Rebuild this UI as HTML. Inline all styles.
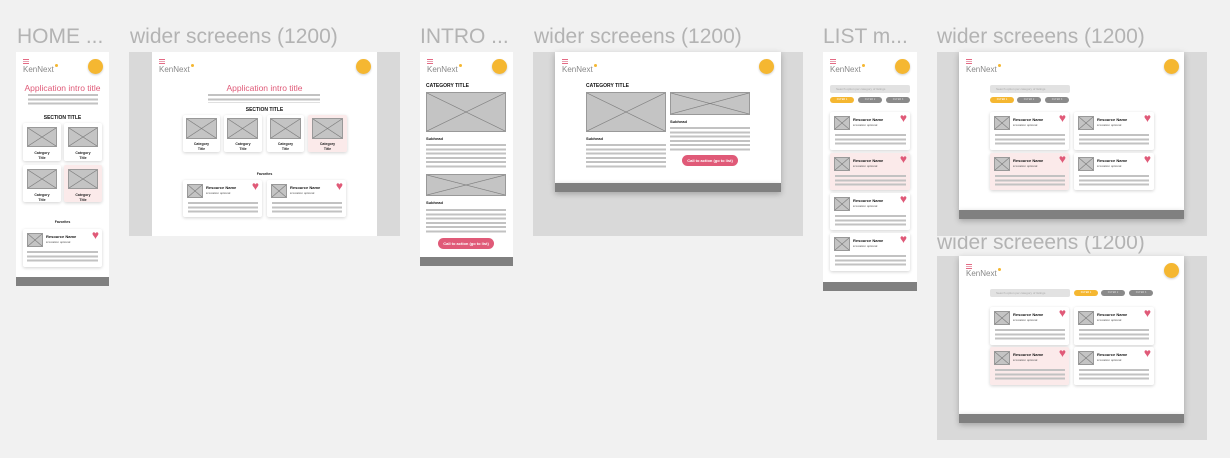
<!DOCTYPE html>
<html><head><meta charset="utf-8"><style>
*{margin:0;padding:0;box-sizing:border-box}
body{width:1230px;height:458px;background:#f1f1f1;position:relative;overflow:hidden;font-family:"Liberation Sans",sans-serif}
.lb{position:absolute;font-size:21px;color:#b3b3b3;line-height:21px;white-space:nowrap}
.g{position:absolute;background:#d9d9d9}
.w{position:absolute;background:#fff}
.wsh{box-shadow:0 2px 6px rgba(0,0,0,.25)}
.bar{position:absolute;background:#808080}
.hb{position:absolute;width:6px;height:1px;background:#e46a84;box-shadow:0 2px 0 #e8a0b0,0 4px 0 #e46a84}
.lg{position:absolute;font-size:8px;color:#888;line-height:8px}
.lg:after{content:"";position:absolute;right:-4px;top:-2px;width:3px;height:3px;border-radius:50%;background:#f5b731}
.ci{position:absolute;width:15px;height:15px;border-radius:50%;background:#f5b731;box-shadow:0 1px 2px rgba(0,0,0,.2)}
.ph{position:absolute;border:1px solid #999;background:linear-gradient(to top right,transparent calc(50% - .6px),#777 50%,transparent calc(50% + .6px)),linear-gradient(to bottom right,transparent calc(50% - .6px),#777 50%,transparent calc(50% + .6px)),#c4c4c4}
.cc{position:absolute;background:#fff;border-radius:2px;box-shadow:0 1px 3px rgba(0,0,0,.18)}
.pk{background:#fbeaea}
.ct{position:absolute;left:0;right:0;text-align:center;font-size:3.5px;line-height:5px;font-weight:bold;color:#222}
.ln{position:absolute;background:repeating-linear-gradient(#c2c2c2 0 2px,transparent 2px 4.3px)}
.tt{position:absolute;font-weight:bold;color:#111;font-size:5px;line-height:5px;white-space:nowrap}
.rn{position:absolute;left:23px;top:6px;font-size:4px;font-weight:bold;color:#111;line-height:4px;white-space:nowrap}
.loc{position:absolute;left:23px;top:12px;font-size:3px;color:#555;line-height:3px;white-space:nowrap}
.ht{position:absolute;right:3px;top:0px;font-size:12px;line-height:12px;color:#e05a78}
.cta{position:absolute;background:#e05a78;color:#fff;border-radius:6px;font-size:4px;line-height:11px;text-align:center;font-weight:bold;height:11px;width:56px}
.sr{position:absolute;background:#e2e2e2;border-radius:2px;height:8px;width:80px;font-size:3px;color:#aaa;line-height:8px;padding-left:6px}
.f{position:absolute;height:6px;width:24px;border-radius:3px;background:#8a8a8a;font-size:2.5px;color:#ddd;line-height:6px;text-align:center}
.fy{background:#f5b731;color:#fff}
.ti{position:absolute;color:#e05a78;font-size:8.5px;line-height:9px;white-space:nowrap;text-align:center}
</style></head><body>

<div class="lb" style="left:17px;top:26px">HOME ...</div>
<div class="lb" style="left:130px;top:26px">wider screeens (1200)</div>
<div class="lb" style="left:420px;top:26px">INTRO ...</div>
<div class="lb" style="left:534px;top:26px">wider screeens (1200)</div>
<div class="lb" style="left:823px;top:26px">LIST m...</div>
<div class="lb" style="left:937px;top:26px">wider screeens (1200)</div>
<div class="lb" style="left:937px;top:232px">wider screeens (1200)</div>

<!-- HOME mobile -->
<div class="w" style="left:16px;top:52px;width:93px;height:225px"></div>
<div class="bar" style="left:16px;top:277px;width:93px;height:9px"></div>
<div class="hb" style="left:23px;top:59px"></div>
<div class="lg" style="left:23px;top:66px">KenNext</div>
<div class="ci" style="left:88px;top:59px"></div>
<div class="ti" style="left:16px;width:93px;top:84px">Application intro title</div>
<div class="ln" style="left:28px;top:94px;width:70px;height:13px"></div>
<div class="tt" style="left:16px;width:93px;text-align:center;top:116px">SECTION TITLE</div>
<div class="cc" style="left:23px;top:123px;width:38px;height:38px"><div class="ph" style="left:4px;top:4px;width:30px;height:20px"></div><div class="ct" style="top:28px">Category<br>Title</div></div>
<div class="cc" style="left:64px;top:123px;width:38px;height:38px"><div class="ph" style="left:4px;top:4px;width:30px;height:20px"></div><div class="ct" style="top:28px">Category<br>Title</div></div>
<div class="cc" style="left:23px;top:165px;width:38px;height:37px"><div class="ph" style="left:4px;top:4px;width:30px;height:20px"></div><div class="ct" style="top:28px">Category<br>Title</div></div>
<div class="cc pk" style="left:64px;top:165px;width:38px;height:37px"><div class="ph" style="left:4px;top:4px;width:30px;height:20px"></div><div class="ct" style="top:28px">Category<br>Title</div></div>
<div class="ct" style="left:16px;width:93px;top:220px">Favorites</div>
<div class="cc" style="left:23px;top:229px;width:79px;height:38px"><div class="ph" style="left:4px;top:4px;width:16px;height:14px"></div><div class="rn">Resource Name</div><div class="loc">● location optional</div><div class="ht">♥</div><div class="ln" style="left:4px;top:22px;width:71px;height:13px"></div></div>

<!-- HOME wide -->
<div class="g" style="left:129px;top:52px;width:271px;height:184px"></div>
<div class="w" style="left:152px;top:52px;width:225px;height:184px"></div>
<div class="hb" style="left:159px;top:59px"></div>
<div class="lg" style="left:159px;top:66px">KenNext</div>
<div class="ci" style="left:356px;top:59px"></div>
<div class="ti" style="left:152px;width:225px;top:84px">Application intro title</div>
<div class="ln" style="left:208px;top:94px;width:112px;height:9px"></div>
<div class="tt" style="left:152px;width:225px;text-align:center;top:108px">SECTION TITLE</div>
<div class="cc" style="left:183px;top:115px;width:37px;height:37px"><div class="ph" style="left:3px;top:3px;width:31px;height:21px"></div><div class="ct" style="top:27px">Category<br>Title</div></div>
<div class="cc" style="left:224px;top:115px;width:38px;height:37px"><div class="ph" style="left:3px;top:3px;width:31px;height:21px"></div><div class="ct" style="top:27px">Category<br>Title</div></div>
<div class="cc" style="left:267px;top:115px;width:37px;height:37px"><div class="ph" style="left:3px;top:3px;width:31px;height:21px"></div><div class="ct" style="top:27px">Category<br>Title</div></div>
<div class="cc pk" style="left:308px;top:115px;width:39px;height:37px"><div class="ph" style="left:4px;top:3px;width:31px;height:21px"></div><div class="ct" style="top:27px">Category<br>Title</div></div>
<div class="ct" style="left:152px;width:225px;top:172px">Favorites</div>
<div class="cc" style="left:183px;top:180px;width:79px;height:37px"><div class="ph" style="left:4px;top:4px;width:16px;height:14px"></div><div class="rn">Resource Name</div><div class="loc">● location optional</div><div class="ht">♥</div><div class="ln" style="left:5px;top:22px;width:70px;height:13px"></div></div>
<div class="cc" style="left:267px;top:180px;width:79px;height:37px"><div class="ph" style="left:4px;top:4px;width:16px;height:14px"></div><div class="rn">Resource Name</div><div class="loc">● location optional</div><div class="ht">♥</div><div class="ln" style="left:5px;top:22px;width:70px;height:13px"></div></div>

<!-- INTRO mobile -->
<div class="w" style="left:420px;top:52px;width:93px;height:205px"></div>
<div class="bar" style="left:420px;top:257px;width:93px;height:9px"></div>
<div class="hb" style="left:427px;top:59px"></div>
<div class="lg" style="left:427px;top:66px">KenNext</div>
<div class="ci" style="left:492px;top:59px"></div>
<div class="tt" style="left:426px;top:84px">CATEGORY TITLE</div>
<div class="ph" style="left:426px;top:92px;width:80px;height:40px"></div>
<div class="tt" style="left:426px;top:136px;font-size:4px">Subhead</div>
<div class="ln" style="left:426px;top:144px;width:80px;height:24px"></div>
<div class="ph" style="left:426px;top:174px;width:80px;height:22px"></div>
<div class="tt" style="left:426px;top:200px;font-size:4px">Subhead</div>
<div class="ln" style="left:426px;top:209px;width:80px;height:24px"></div>
<div class="cta" style="left:438px;top:238px">Call to action (go to list)</div>

<!-- INTRO wide -->
<div class="g" style="left:533px;top:52px;width:270px;height:184px"></div>
<div class="w wsh" style="left:555px;top:52px;width:226px;height:131px"></div>
<div class="bar" style="left:555px;top:183px;width:226px;height:9px;box-shadow:0 2px 6px rgba(0,0,0,.25)"></div>
<div class="hb" style="left:562px;top:59px"></div>
<div class="lg" style="left:562px;top:66px">KenNext</div>
<div class="ci" style="left:759px;top:59px"></div>
<div class="tt" style="left:586px;top:84px">CATEGORY TITLE</div>
<div class="ph" style="left:586px;top:92px;width:80px;height:40px"></div>
<div class="ph" style="left:670px;top:92px;width:80px;height:23px"></div>
<div class="tt" style="left:670px;top:119px;font-size:4px">Subhead</div>
<div class="ln" style="left:670px;top:127px;width:80px;height:24px"></div>
<div class="tt" style="left:586px;top:136px;font-size:4px">Subhead</div>
<div class="ln" style="left:586px;top:144px;width:80px;height:24px"></div>
<div class="cta" style="left:682px;top:155px">Call to action (go to list)</div>

<!-- LIST mobile -->
<div class="w" style="left:823px;top:52px;width:94px;height:230px"></div>
<div class="bar" style="left:823px;top:282px;width:94px;height:9px"></div>
<div class="hb" style="left:830px;top:59px"></div>
<div class="lg" style="left:830px;top:66px">KenNext</div>
<div class="ci" style="left:895px;top:59px"></div>
<div class="sr" style="left:830px;top:85px">Search option per category of listings</div>
<div class="f fy" style="left:830px;top:97px">FILTER 1</div><div class="f" style="left:858px;top:97px">FILTER 2</div><div class="f" style="left:886px;top:97px">FILTER 3</div>
<div class="cc" style="left:830px;top:112px;width:80px;height:38px"><div class="ph" style="left:4px;top:4px;width:16px;height:14px"></div><div class="rn">Resource Name</div><div class="loc">● location optional</div><div class="ht">♥</div><div class="ln" style="left:5px;top:22px;width:71px;height:13px"></div></div>
<div class="cc pk" style="left:830px;top:153px;width:80px;height:37px"><div class="ph" style="left:4px;top:4px;width:16px;height:14px"></div><div class="rn">Resource Name</div><div class="loc">● location optional</div><div class="ht">♥</div><div class="ln" style="left:5px;top:22px;width:71px;height:13px"></div></div>
<div class="cc" style="left:830px;top:193px;width:80px;height:37px"><div class="ph" style="left:4px;top:4px;width:16px;height:14px"></div><div class="rn">Resource Name</div><div class="loc">● location optional</div><div class="ht">♥</div><div class="ln" style="left:5px;top:22px;width:71px;height:13px"></div></div>
<div class="cc" style="left:830px;top:233px;width:80px;height:38px"><div class="ph" style="left:4px;top:4px;width:16px;height:14px"></div><div class="rn">Resource Name</div><div class="loc">● location optional</div><div class="ht">♥</div><div class="ln" style="left:5px;top:22px;width:71px;height:13px"></div></div>

<!-- LIST wide 1 -->
<div class="g" style="left:937px;top:52px;width:270px;height:184px"></div>
<div class="w wsh" style="left:959px;top:52px;width:225px;height:158px"></div>
<div class="bar" style="left:959px;top:210px;width:225px;height:9px;box-shadow:0 2px 6px rgba(0,0,0,.25)"></div>
<div class="hb" style="left:966px;top:59px"></div>
<div class="lg" style="left:966px;top:66px">KenNext</div>
<div class="ci" style="left:1164px;top:59px"></div>
<div class="sr" style="left:990px;top:85px">Search option per category of listings</div>
<div class="f fy" style="left:990px;top:97px">FILTER 1</div><div class="f" style="left:1017px;top:97px">FILTER 2</div><div class="f" style="left:1045px;top:97px">FILTER 3</div>
<div class="cc" style="left:990px;top:112px;width:79px;height:38px"><div class="ph" style="left:4px;top:4px;width:16px;height:14px"></div><div class="rn">Resource Name</div><div class="loc">● location optional</div><div class="ht">♥</div><div class="ln" style="left:5px;top:22px;width:70px;height:13px"></div></div>
<div class="cc" style="left:1074px;top:112px;width:80px;height:38px"><div class="ph" style="left:4px;top:4px;width:16px;height:14px"></div><div class="rn">Resource Name</div><div class="loc">● location optional</div><div class="ht">♥</div><div class="ln" style="left:5px;top:22px;width:70px;height:13px"></div></div>
<div class="cc pk" style="left:990px;top:153px;width:79px;height:37px"><div class="ph" style="left:4px;top:4px;width:16px;height:14px"></div><div class="rn">Resource Name</div><div class="loc">● location optional</div><div class="ht">♥</div><div class="ln" style="left:5px;top:22px;width:70px;height:13px"></div></div>
<div class="cc" style="left:1074px;top:153px;width:80px;height:37px"><div class="ph" style="left:4px;top:4px;width:16px;height:14px"></div><div class="rn">Resource Name</div><div class="loc">● location optional</div><div class="ht">♥</div><div class="ln" style="left:5px;top:22px;width:70px;height:13px"></div></div>

<!-- LIST wide 2 -->
<div class="g" style="left:937px;top:256px;width:270px;height:184px"></div>
<div class="w wsh" style="left:959px;top:256px;width:225px;height:158px"></div>
<div class="bar" style="left:959px;top:414px;width:225px;height:9px;box-shadow:0 2px 6px rgba(0,0,0,.25)"></div>
<div class="hb" style="left:966px;top:264px"></div>
<div class="lg" style="left:966px;top:270px">KenNext</div>
<div class="ci" style="left:1164px;top:263px"></div>
<div class="sr" style="left:990px;top:289px">Search option per category of listings</div>
<div class="f fy" style="left:1074px;top:290px">FILTER 1</div><div class="f" style="left:1101px;top:290px">FILTER 2</div><div class="f" style="left:1129px;top:290px">FILTER 3</div>
<div class="cc" style="left:990px;top:307px;width:79px;height:38px"><div class="ph" style="left:4px;top:4px;width:16px;height:14px"></div><div class="rn">Resource Name</div><div class="loc">● location optional</div><div class="ht">♥</div><div class="ln" style="left:5px;top:22px;width:70px;height:13px"></div></div>
<div class="cc" style="left:1074px;top:307px;width:80px;height:38px"><div class="ph" style="left:4px;top:4px;width:16px;height:14px"></div><div class="rn">Resource Name</div><div class="loc">● location optional</div><div class="ht">♥</div><div class="ln" style="left:5px;top:22px;width:70px;height:13px"></div></div>
<div class="cc pk" style="left:990px;top:347px;width:79px;height:38px"><div class="ph" style="left:4px;top:4px;width:16px;height:14px"></div><div class="rn">Resource Name</div><div class="loc">● location optional</div><div class="ht">♥</div><div class="ln" style="left:5px;top:22px;width:70px;height:13px"></div></div>
<div class="cc" style="left:1074px;top:347px;width:80px;height:38px"><div class="ph" style="left:4px;top:4px;width:16px;height:14px"></div><div class="rn">Resource Name</div><div class="loc">● location optional</div><div class="ht">♥</div><div class="ln" style="left:5px;top:22px;width:70px;height:13px"></div></div>

</body></html>
